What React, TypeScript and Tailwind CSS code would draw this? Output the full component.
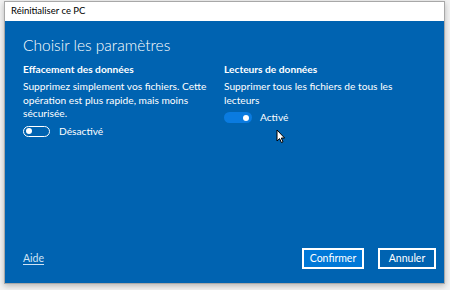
import React from "react";

export default function App() {
  return (
    <div className="w-[450px] h-[290px] bg-[#f3f3f3] pl-[4px] pr-[5px] pt-[1px] pb-[6px]" style={{ fontFamily: 'Lato, "Open Sans", sans-serif' }}>
      <div className="flex h-full flex-col border border-[#a8a8a8] shadow-[0_2px_6px_rgba(0,0,0,0.25)]">
        <div className="flex h-[19px] items-center bg-white px-[6px] text-[9.5px] text-black">Réinitialiser ce PC</div>
        <div className="relative flex flex-1 flex-col bg-[#0063b1] pl-[18px] pr-[8px] pt-[12px] pb-[14px] text-white">
          <div className="text-[15.5px] font-light leading-[24px]">Choisir les paramètres</div>
          <div className="mt-[5px] grid grid-cols-[201px_1fr]">
            <div className="flex flex-col">
              <div className="text-[10.2px] font-bold leading-[14px]">Effacement des données</div>
              <div className="mt-[4px] text-[10.2px] leading-[13.6px]">Supprimez simplement vos fichiers. Cette opération est plus rapide, mais moins sécurisée.</div>
              <div className="mt-[3px] flex items-center gap-[9px]">
                <div className="flex h-[11px] w-[27px] items-center rounded-full border-[1.5px] border-white px-[2px]">
                  <div className="h-[6px] w-[6px] rounded-full bg-white" />
                </div>
                <span className="text-[10.2px]">Désactivé</span>
              </div>
            </div>
            <div className="flex flex-col pr-[30px]">
              <div className="text-[10.2px] font-bold leading-[14px]">Lecteurs de données</div>
              <div className="mt-[4px] text-[10.2px] leading-[13.6px]">Supprimer tous les fichiers de tous les lecteurs</div>
              <div className="mt-[3px] flex items-center gap-[8px]">
                <div className="flex h-[11px] w-[28px] items-center justify-end rounded-full bg-[#0a7be0] px-[3px]">
                  <div className="h-[6px] w-[6px] rounded-full bg-white" />
                </div>
                <span className="text-[10.2px]">Activé</span>
              </div>
            </div>
          </div>
          <svg className="absolute left-[271px] top-[108px]" width="10" height="15" viewBox="0 0 10 15">
            <path d="M1 1 L1 12 L3.6 9.6 L5.4 13.6 L7 12.9 L5.3 9 L8.6 9 Z" fill="white" stroke="black" strokeWidth="1" />
          </svg>
          <div className="mt-auto flex items-center">
            <span className="text-[10.5px] text-[#cfe3f5] underline underline-offset-2">Aide</span>
            <div className="ml-auto flex gap-[14px]">
              <button className="h-[21px] w-[62px] border-2 border-white bg-[#0078d7] text-[10.5px] text-white">Confirmer</button>
              <button className="h-[21px] w-[58px] border-2 border-white bg-[#0063b1] text-[10.5px] text-white">Annuler</button>
            </div>
          </div>
        </div>
      </div>
    </div>
  );
}
